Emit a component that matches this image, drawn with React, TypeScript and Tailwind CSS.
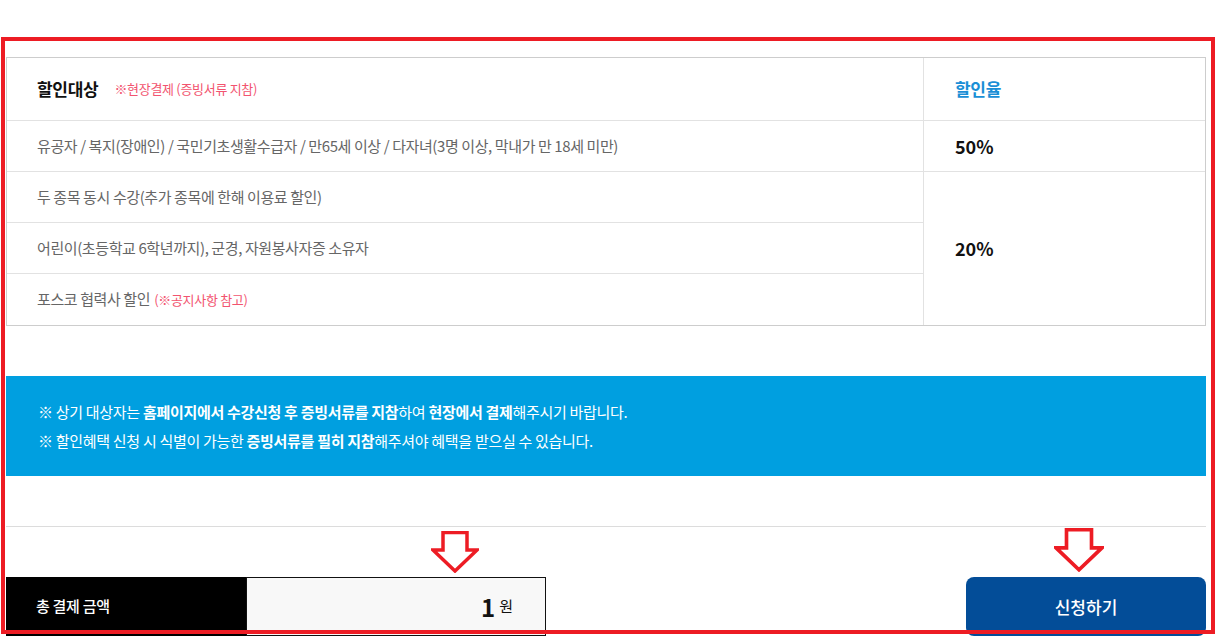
import React from "react";

function DownArrow({ className }: { className: string }) {
  return (
    <svg viewBox="0 0 48 42" className={className}>
      <polygon
        points="12,1.5 36,1.5 36,19 46,19 24,40 2,19 12,19"
        fill="white"
        stroke="#ed1c24"
        strokeWidth="3.5"
        strokeLinejoin="miter"
      />
    </svg>
  );
}

const rows = [
  "두 종목 동시 수강(추가 종목에 한해 이용료 할인)",
  "어린이(초등학교 6학년까지), 군경, 자원봉사자증 소유자",
];

export default function App() {
  return (
    <div
      className="relative w-[1220px] h-[638px] overflow-hidden bg-white"
      style={{ fontFamily: '"Noto Sans CJK KR", "Noto Sans", sans-serif' }}
    >
      <div className="pl-[6px] pt-[57px] w-[1206px]">
        {/* discount table */}
        <div className="border border-[#cdcdcd] text-[15px] text-[#666] tracking-[-0.4px]">
          <div className="flex h-[63px] border-b border-[#e2e2e2]">
            <div className="w-[917px] border-r border-[#e2e2e2] pl-[30px] flex items-center">
              <span className="text-[17px] font-bold text-[#111] tracking-[-0.3px]">할인대상</span>
              <span className="ml-[16px] text-[13px] text-[#f2546f] tracking-[-0.3px]">※현장결제 (증빙서류 지참)</span>
            </div>
            <div className="flex-1 pl-[31px] flex items-center text-[17px] font-bold text-[#1a8fd6] tracking-[-0.3px]">할인율</div>
          </div>
          <div className="flex h-[51px] border-b border-[#e2e2e2]">
            <div className="w-[917px] border-r border-[#e2e2e2] pl-[30px] flex items-center">
              유공자 / 복지(장애인) / 국민기초생활수급자 / 만65세 이상 / 다자녀(3명 이상, 막내가 만 18세 미만)
            </div>
            <div className="flex-1 pl-[31px] flex items-center text-[18px] font-bold text-[#111] tracking-normal">50%</div>
          </div>
          <div className="flex">
            <div className="w-[917px] border-r border-[#e2e2e2]">
              {rows.map((r) => (
                <div key={r} className="h-[51px] border-b border-[#e2e2e2] pl-[30px] flex items-center">
                  {r}
                </div>
              ))}
              <div className="h-[51px] pl-[30px] flex items-center">
                포스코 협력사 할인
                <span className="ml-[4px] text-[13px] text-[#f2546f] tracking-[-0.3px]">(※공지사항 참고)</span>
              </div>
            </div>
            <div className="flex-1 pl-[31px] flex items-center text-[18px] font-bold text-[#111] tracking-normal">20%</div>
          </div>
        </div>

        {/* notice */}
        <div className="mt-[50px] h-[100px] bg-[#009fe0] pl-[32px] flex flex-col justify-center text-white text-[15px] leading-[29px] tracking-[-0.3px]">
          <p>
            ※ 상기 대상자는 <b>홈페이지에서 수강신청 후 증빙서류를 지참</b>하여 <b>현장에서 결제</b>해주시기 바랍니다.
          </p>
          <p>
            ※ 할인혜택 신청 시 식별이 가능한 <b>증빙서류를 필히 지참</b>해주셔야 혜택을 받으실 수 있습니다.
          </p>
        </div>

        <div className="mt-[50px] h-px bg-[#dcdcdc]" />

        {/* total */}
        <div className="mt-[50px] flex items-start justify-between">
          <div className="flex h-[59px]">
            <div className="w-[240px] bg-black text-white text-[15px] font-medium pl-[30px] flex items-center tracking-[-0.3px]">
              총 결제 금액
            </div>
            <div className="w-[300px] bg-[#f8f8f8] border border-[#111] flex items-center justify-end pr-[32px]">
              <span className="text-[24px] font-bold text-[#111]">1</span>
              <span className="ml-[4px] text-[15px] text-[#111]">원</span>
            </div>
          </div>
          <button className="w-[240px] h-[59px] rounded-[8px] bg-[#034d98] text-white text-[17px] font-medium">
            신청하기
          </button>
        </div>
      </div>

      {/* annotation overlays */}
      <div className="absolute left-[1px] top-[37px] w-[1214px] h-[597px] border-[4px] border-[#ed1c24] pointer-events-none" />
      <DownArrow className="absolute left-[431px] top-[531px] w-[48px] h-[42px]" />
      <DownArrow className="absolute left-[1054px] top-[528px] w-[50px] h-[44px]" />
    </div>
  );
}
